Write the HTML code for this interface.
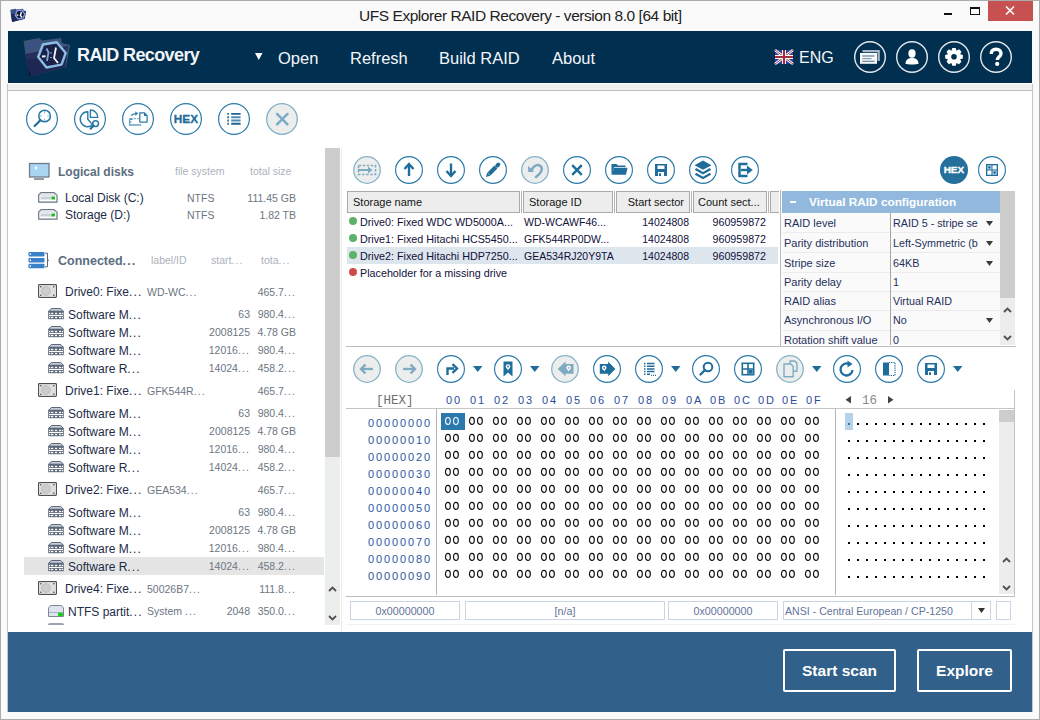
<!DOCTYPE html>
<html><head><meta charset="utf-8">
<style>
*{margin:0;padding:0;box-sizing:border-box}
html,body{width:1040px;height:720px;overflow:hidden;background:#fafafa;font-family:"Liberation Sans",sans-serif}
.a{position:absolute}
.t{position:absolute;white-space:nowrap;line-height:1}
svg{position:absolute;overflow:visible}
</style></head><body>
<!-- window border -->
<div class="a" style="left:0;top:0;width:1040px;height:720px;border:1px solid #ababab"></div>
<!-- title bar -->
<svg style="left:9px;top:7px" width="19.3" height="16.5" viewBox="0 0 56 46">
  <path d="M3.5 7 L19 4 L22 6.5 L41 4 L42 9 L50 11 L46 33 L12 42 L9.5 42 L6 24 Z" fill="#3a4f86"/>
  <path d="M5 20 L48 12 L45 33 L12 42 L9 42 Z" fill="#1e2a5a"/>
  <path d="M8 34 L11 42 L9.5 42 Z" fill="#0c1020"/>
  <polygon points="36.7,8.3 45.7,19 41.5,30.6 26.5,33.5 18.2,23 23,10.5" fill="#101830" stroke="#8898e0" stroke-width="4" stroke-linejoin="round"/>
  <path d="M22 22.5 L27 22.2" stroke="#fff" stroke-width="4"/>
  <path d="M36 13.5 L33 24 L38 29" stroke="#fff" stroke-width="4" fill="none"/>
</svg>
<div class="t" style="left:359px;top:8px;font-size:15.5px;letter-spacing:-0.45px;color:#222">UFS Explorer RAID Recovery - version 8.0 [64 bit]</div>
<div class="a" style="left:944px;top:13px;width:8px;height:2px;background:#111"></div>
<div class="a" style="left:970px;top:7px;width:10px;height:8px;border:1px solid #111;border-top-width:2px"></div>
<div class="a" style="left:988px;top:1px;width:45px;height:20px;background:#c75050"></div>
<svg style="left:1005px;top:6px" width="10" height="9" viewBox="0 0 10 9"><path d="M1 0.5 L9 8.5 M9 0.5 L1 8.5" stroke="#fff" stroke-width="1.6"/></svg>

<!-- header -->
<div class="a" style="left:8px;top:31px;width:1024px;height:52px;background:#012f50"></div>
<svg style="left:20px;top:34px" width="56" height="46" viewBox="0 0 56 46">
  <path d="M3.5 7 L19 4 L22 6.5 L41 4 L42 9 L50 11 L46 33 L12 42 L9.5 42 L6 24 Z" fill="#3c5479"/>
  <path d="M5 20 L48 12 L45 33 L12 42 L9 42 Z" fill="#24305a"/>
  <path d="M6 26 L47 20 L45 33 L12 42 L9 42 Z" fill="#1d2751"/>
  <path d="M8 34 L11 42 L9.5 42 Z" fill="#0c1020"/>
  <g fill="#4a3cc0"><circle cx="10" cy="11" r="0.7"/><circle cx="13" cy="9" r="0.7"/><circle cx="16" cy="8.5" r="0.7"/><circle cx="19" cy="8.5" r="0.7"/><circle cx="8.5" cy="14" r="0.7"/><circle cx="11.5" cy="13.5" r="0.7"/><circle cx="15" cy="11.5" r="0.7"/><circle cx="9" cy="19" r="0.7"/></g>
  <polygon points="36.7,8.3 45.7,19 41.5,30.6 26.5,33.5 18.2,23 23,10.5" fill="#1a2248" stroke="#8cbce6" stroke-width="2.4" stroke-linejoin="round"/>
  <path d="M22 22.5 L25.5 22.2" stroke="#f4f6fa" stroke-width="2"/>
  <path d="M26.5 14.5 L28.5 18.5 L27 27" stroke="#7fa8d8" stroke-width="1.8" fill="none"/>
  <path d="M36 13.5 L34 24 L38 29" stroke="#f4f6fa" stroke-width="1.8" fill="none"/>
  <path d="M31 18.5 V19.5 M31 23 V24" stroke="#9ec6ee" stroke-width="1.5"/>
</svg>
<div class="t" style="left:77px;top:46px;font-size:18px;font-weight:bold;color:#f2f4f8;letter-spacing:-0.6px">RAID Recovery</div>
<svg style="left:255px;top:53px" width="8" height="7" viewBox="0 0 8 7"><path d="M0 0 H7.5 L3.75 7 Z" fill="#fff"/></svg>
<div class="t" style="left:278px;top:50px;font-size:16.5px;color:#f4f6f9">Open</div>
<div class="t" style="left:350px;top:50px;font-size:16.5px;color:#f4f6f9">Refresh</div>
<div class="t" style="left:439px;top:50px;font-size:16.5px;color:#f4f6f9">Build RAID</div>
<div class="t" style="left:552px;top:50px;font-size:16.5px;color:#f4f6f9">About</div>
<svg style="left:775px;top:50px" width="18" height="14" viewBox="0 0 18 14">
  <rect width="18" height="14" fill="#2a40a0"/>
  <path d="M0 0 L18 14 M18 0 L0 14" stroke="#fff" stroke-width="2.6"/>
  <path d="M0 0 L18 14 M18 0 L0 14" stroke="#b03848" stroke-width="1"/>
  <path d="M9 0 V14 M0 7 H18" stroke="#fff" stroke-width="4"/>
  <path d="M9 0 V14 M0 7 H18" stroke="#a03040" stroke-width="2.2"/>
</svg>
<div class="t" style="left:799px;top:50px;font-size:16px;color:#f4f6f9">ENG</div>
<svg style="left:854px;top:41px" width="32" height="32" viewBox="0 0 32 32">
  <circle cx="16" cy="16" r="15.3" fill="none" stroke="#e4e8ec" stroke-width="1.4"/>
  <path d="M8.5 9 H25.8 V20 H23.5 V11.3 H8.5 Z" fill="#a9b7c6"/>
  <rect x="6" y="12" width="17" height="10.8" fill="#f6f8fa"/>
  <path d="M8.3 15 H20.5 M8.3 20.2 H20.5" stroke="#4f6680" stroke-width="1.1"/>
  <path d="M8.3 17.6 H17.5" stroke="#7d93aa" stroke-width="1.1"/>
</svg>
<svg style="left:896px;top:41px" width="32" height="32" viewBox="0 0 32 32">
  <circle cx="16" cy="16" r="15.3" fill="none" stroke="#e4e8ec" stroke-width="1.4"/>
  <ellipse cx="16" cy="12.5" rx="3.6" ry="4.2" fill="#fff"/>
  <path d="M9.5 22.5 C9.5 19 12 17.5 14.5 17 L17.5 17 C20 17.5 22.5 19 22.5 22.5 C22.5 23.8 9.5 23.8 9.5 22.5 Z" fill="#fff"/>
</svg>
<svg style="left:938px;top:41px" width="32" height="32" viewBox="0 0 32 32">
  <circle cx="16" cy="16" r="15.3" fill="none" stroke="#e4e8ec" stroke-width="1.4"/>
  <g transform="translate(16 15.8)"><path d="M-2.53 -6.10 L-1.72 -8.83 L1.72 -8.83 L2.53 -6.10 L2.53 -6.10 L5.03 -7.46 L7.46 -5.03 L6.10 -2.53 L6.10 -2.53 L8.83 -1.72 L8.83 1.72 L6.10 2.53 L6.10 2.53 L7.46 5.03 L5.03 7.46 L2.53 6.10 L2.53 6.10 L1.72 8.83 L-1.72 8.83 L-2.53 6.10 L-2.53 6.10 L-5.03 7.46 L-7.46 5.03 L-6.10 2.53 L-6.10 2.53 L-8.83 1.72 L-8.83 -1.72 L-6.10 -2.53 L-6.10 -2.53 L-7.46 -5.03 L-5.03 -7.46 L-2.53 -6.10 Z" fill="#fff"/><circle r="2.8" fill="#012f50"/></g>
</svg>
<svg style="left:980px;top:41px" width="32" height="32" viewBox="0 0 32 32">
  <circle cx="16" cy="16" r="15.3" fill="none" stroke="#e4e8ec" stroke-width="1.4"/>
  <path d="M11.2 13 C11.2 9.6 13.4 8.2 16.2 8.2 C19.2 8.2 21 10 21 12.5 C21 15.6 17.4 16 17.4 19" fill="none" stroke="#fff" stroke-width="3.4"/>
  <circle cx="17.2" cy="22.9" r="2.1" fill="#fff"/>
</svg>

<!-- strip below header -->
<div class="a" style="left:7px;top:83px;width:1026px;height:1px;background:#fff"></div>
<div class="a" style="left:8px;top:84px;width:1024px;height:6px;background:#eff1f1"></div>
<div class="a" style="left:7px;top:90px;width:1026px;height:1px;background:#bdbdbd"></div>
<div class="a" style="left:7px;top:84px;width:1px;height:628px;background:#c4c4c4"></div>
<div class="a" style="left:1032px;top:84px;width:1px;height:628px;background:#c4c4c4"></div>
<!-- content white -->
<div class="a" style="left:8px;top:91px;width:1024px;height:541px;background:#fff"></div>

<!-- toolbar 1 -->
<svg style="left:26px;top:103px" width="32" height="32" viewBox="0 0 32 32">
  <circle cx="16" cy="16" r="15.4" fill="none" stroke="#2a79a6" stroke-width="1.2"/>
  <circle cx="18.6" cy="13" r="5.8" fill="none" stroke="#2a79a6" stroke-width="1.6"/>
  <path d="M18.6 8 V10.3 M18.6 15.7 V18 M13.6 13 H15.9 M21.3 13 H23.6" stroke="#8ab8d4" stroke-width="1.1"/>
  <path d="M14.4 17.2 L8.6 23" stroke="#1f6d9a" stroke-width="2.2" stroke-linecap="round"/>
</svg>
<svg style="left:74px;top:103px" width="32" height="32" viewBox="0 0 32 32">
  <circle cx="16" cy="16" r="15.4" fill="none" stroke="#2a79a6" stroke-width="1.2"/>
  <path d="M13.8 8.7 A7.5 7.5 0 1 0 18.6 21.9 L13.8 16.2 Z" fill="none" stroke="#2a79a6" stroke-width="1.4" stroke-linejoin="round"/>
  <path d="M16.4 7 V14.4 H23.8 A7.4 7.4 0 0 0 16.4 7 Z" fill="none" stroke="#2a79a6" stroke-width="1.4" stroke-linejoin="round"/>
  <circle cx="21.6" cy="20.6" r="2.9" fill="#fff" stroke="#2a79a6" stroke-width="1.5"/>
  <path d="M19.6 22.7 L16.6 25.7" stroke="#1f6d9a" stroke-width="2" stroke-linecap="round"/>
</svg>
<svg style="left:122px;top:103px" width="32" height="32" viewBox="0 0 32 32">
  <circle cx="16" cy="16" r="15.4" fill="none" stroke="#2a79a6" stroke-width="1.2"/>
  <path d="M8 15.6 H17.4" stroke="#8ab8d4" stroke-width="1.1" stroke-dasharray="2.5 1"/>
  <path d="M7.6 15.6 V22 H19.2" fill="none" stroke="#6aa2c4" stroke-width="1.3"/>
  <path d="M8 16.2 H10.5" stroke="#2a79a6" stroke-width="1.1"/>
  <path d="M8.2 18.2 L9.8 19 L8.2 19.8 Z" fill="#2a79a6"/>
  <path d="M17.8 9.8 H22.3 L25.1 12.6 V19.1 H17.8 Z" fill="#fff" stroke="#2a79a6" stroke-width="1.25" stroke-linejoin="round"/>
  <path d="M22 9.4 L25.5 12.9 H22 Z" fill="#2a79a6"/>
  <path d="M9.2 12.6 C10.5 11.3 12 10.7 14 10.6" fill="none" stroke="#2a79a6" stroke-width="1.4"/>
  <path d="M13.4 8.3 L16 10.6 L13.4 12.8 Z" fill="#2a79a6"/>
</svg>
<svg style="left:170px;top:103px" width="32" height="32" viewBox="0 0 32 32">
  <circle cx="16" cy="16" r="15.4" fill="none" stroke="#2a79a6" stroke-width="1.2"/>
  <text x="3.8" y="19.8" font-family="Liberation Sans" font-weight="bold" font-size="10.6" textLength="24.2" lengthAdjust="spacingAndGlyphs" fill="#1f6d9a" stroke="#1f6d9a" stroke-width="0.3">HEX</text>
</svg>
<svg style="left:218px;top:103px" width="32" height="32" viewBox="0 0 32 32">
  <circle cx="16" cy="16" r="15.4" fill="none" stroke="#2a79a6" stroke-width="1.2"/>
  <path d="M9.3 10.9 H10.9 M9.3 14.2 H10.9 M9.3 17.5 H10.9 M9.3 20.8 H10.9 M13.2 10.9 H22.6 M13.2 20.8 H22.6" stroke="#1f6490" stroke-width="1.9"/>
  <path d="M13.2 14.2 H22.6 M13.2 17.5 H22.6" stroke="#4f8fb5" stroke-width="1.9"/>
</svg>
<svg style="left:266px;top:103px" width="32" height="32" viewBox="0 0 32 32">
  <circle cx="16" cy="16" r="15.3" fill="#eceeee" stroke="#82b0c8" stroke-width="1.3"/>
  <path d="M11 10.9 L21.5 21.4 M21.5 10.9 L11 21.4" stroke="#7aaac4" stroke-width="2.4" stroke-linecap="round"/>
</svg>

<!-- left panel -->
<svg style="left:29px;top:163px" width="21" height="18" viewBox="0 0 21 18"><rect x="0.5" y="0.5" width="19.5" height="13.5" fill="#a9d5f3" stroke="#6f7b8a" stroke-width="1.3"/><rect x="5" y="15.3" width="10" height="1.5" fill="#6f7b8a"/><path d="M6 2.5 V7 L8.5 5 Z" fill="#fff"/></svg>
<div class="t" style="left:58px;top:166px;font-size:12px;font-weight:bold;color:#5b6d80">Logical disks</div>
<div class="t" style="left:175px;top:166px;font-size:10.5px;color:#abb2ba">file system</div>
<div class="t" style="left:250px;top:166px;font-size:10.5px;color:#abb2ba">total size</div>
<svg style="left:38px;top:192px" width="20" height="11" viewBox="0 0 20 11"><path d="M3 0.7 H16 L19 3 V10.2 H0.7 V3 Z" fill="#fff" stroke="#6a7686" stroke-width="1.2" stroke-linejoin="round"/><path d="M1 3 H19" stroke="#b8c0ca" stroke-width="0.8"/><rect x="2.5" y="4.5" width="11" height="3" fill="#c9d0da"/><rect x="13.5" y="4.5" width="3.5" height="3" fill="#18c018"/></svg>
<div class="t" style="left:65px;top:192px;font-size:12px;color:#1d2b48">Local Disk (C:)</div>
<div class="t" style="left:187px;top:193px;font-size:10.5px;color:#6c7682">NTFS</div>
<div class="t" style="left:196px;width:100px;text-align:right;top:193px;font-size:10.5px;color:#6c7682">111.45 GB</div>
<svg style="left:38px;top:209px" width="20" height="11" viewBox="0 0 20 11"><path d="M3 0.7 H16 L19 3 V10.2 H0.7 V3 Z" fill="#fff" stroke="#6a7686" stroke-width="1.2" stroke-linejoin="round"/><path d="M1 3 H19" stroke="#b8c0ca" stroke-width="0.8"/><rect x="2.5" y="4.5" width="11" height="3" fill="#c9d0da"/><rect x="13.5" y="4.5" width="3.5" height="3" fill="#18c018"/></svg>
<div class="t" style="left:65px;top:209px;font-size:12px;color:#1d2b48">Storage (D:)</div>
<div class="t" style="left:187px;top:210px;font-size:10.5px;color:#6c7682">NTFS</div>
<div class="t" style="left:196px;width:100px;text-align:right;top:210px;font-size:10.5px;color:#6c7682">1.82 TB</div>
<svg style="left:28px;top:251px" width="22" height="18" viewBox="0 0 22 18"><g fill="#3b81c9"><rect x="0.5" y="1" width="16" height="4.4" rx="0.8"/><rect x="0.5" y="7" width="16" height="4.4" rx="0.8"/><rect x="0.5" y="12.8" width="16" height="4.4" rx="0.8"/></g><g fill="#fff"><rect x="1.8" y="2.4" width="1.2" height="1.6"/><rect x="1.8" y="8.4" width="1.2" height="1.6"/><rect x="1.8" y="14.2" width="1.2" height="1.6"/></g><path d="M17 2.2 H19.5 V15.8 H17 M19.5 9.2 H21" fill="none" stroke="#5a6470" stroke-width="1"/></svg>
<div class="t" style="left:58px;top:255px;font-size:12.5px;font-weight:bold;color:#5b6d80">Connected<span style="letter-spacing:1.1px">...</span></div>
<div class="t" style="left:151px;top:255px;font-size:10.5px;color:#abb2ba">label/ID</div>
<div class="t" style="left:211px;top:255px;font-size:10.5px;color:#abb2ba">start<span style="letter-spacing:1.1px">...</span></div>
<div class="t" style="left:261px;top:255px;font-size:10.5px;color:#abb2ba">tota<span style="letter-spacing:1.1px">...</span></div>
<div class="a" style="left:24px;top:557px;width:300px;height:18px;background:#e5e5e5"></div>
<svg style="left:38px;top:284px" width="20" height="15" viewBox="0 0 20 15"><rect x="0.6" y="0.6" width="17.8" height="12.8" rx="0.8" fill="#fff" stroke="#505054" stroke-width="1.2"/><rect x="2" y="2" width="15" height="10" fill="#dedee0"/><circle cx="7.9" cy="7" r="4.3" fill="#cdcdd0" stroke="#b4b4b8" stroke-width="0.8"/><g fill="#444"><circle cx="2.8" cy="2.8" r="0.8"/><circle cx="15.8" cy="2.8" r="0.8"/><circle cx="2.8" cy="11.3" r="0.8"/><circle cx="15.8" cy="11.3" r="0.8"/></g></svg>
<div class="t" style="left:65px;top:286px;font-size:12px;color:#1d2b48">Drive0: Fixe<span style="letter-spacing:1.1px">...</span></div>
<div class="t" style="left:147px;top:287px;font-size:10.5px;color:#6c7682">WD-WC<span style="letter-spacing:1.1px">...</span></div>
<div class="t" style="left:196px;width:100px;text-align:right;top:287px;font-size:10.5px;color:#6c7682">465.7<span style="letter-spacing:1.1px">...</span></div>
<svg style="left:48px;top:308px" width="16" height="12" viewBox="0 0 16 12"><path d="M3.2 0.5 H12.8 L15.3 3.2 H0.7 Z" fill="#c9cdd8" stroke="#5c6879" stroke-width="1"/><rect x="0.2" y="3" width="15.6" height="8.2" fill="#5c6879"/><g fill="#fff"><rect x="1" y="4.8" width="1.2" height="1.3"/><rect x="3" y="4.8" width="2.3" height="1.3"/><rect x="7" y="4.8" width="2.1" height="1.3"/><rect x="11" y="4.8" width="2.2" height="1.3"/><rect x="14" y="4.8" width="1.1" height="1.3"/><rect x="1" y="8.9" width="1.2" height="1.3"/><rect x="3" y="8.9" width="2.3" height="1.3"/><rect x="7" y="8.9" width="2.1" height="1.3"/><rect x="11" y="8.9" width="2.2" height="1.3"/><rect x="14" y="8.9" width="1.1" height="1.3"/><rect x="1" y="6.9" width="14" height="1.2"/></g></svg>
<div class="t" style="left:68px;top:309px;font-size:12px;color:#1d2b48">Software M<span style="letter-spacing:1.1px">...</span></div>
<div class="t" style="left:150px;width:100px;text-align:right;top:309px;font-size:10.5px;color:#6c7682">63</div>
<div class="t" style="left:196px;width:100px;text-align:right;top:309px;font-size:10.5px;color:#6c7682">980.4<span style="letter-spacing:1.1px">...</span></div>
<svg style="left:48px;top:326px" width="16" height="12" viewBox="0 0 16 12"><path d="M3.2 0.5 H12.8 L15.3 3.2 H0.7 Z" fill="#c9cdd8" stroke="#5c6879" stroke-width="1"/><rect x="0.2" y="3" width="15.6" height="8.2" fill="#5c6879"/><g fill="#fff"><rect x="1" y="4.8" width="1.2" height="1.3"/><rect x="3" y="4.8" width="2.3" height="1.3"/><rect x="7" y="4.8" width="2.1" height="1.3"/><rect x="11" y="4.8" width="2.2" height="1.3"/><rect x="14" y="4.8" width="1.1" height="1.3"/><rect x="1" y="8.9" width="1.2" height="1.3"/><rect x="3" y="8.9" width="2.3" height="1.3"/><rect x="7" y="8.9" width="2.1" height="1.3"/><rect x="11" y="8.9" width="2.2" height="1.3"/><rect x="14" y="8.9" width="1.1" height="1.3"/><rect x="1" y="6.9" width="14" height="1.2"/></g></svg>
<div class="t" style="left:68px;top:327px;font-size:12px;color:#1d2b48">Software M<span style="letter-spacing:1.1px">...</span></div>
<div class="t" style="left:150px;width:100px;text-align:right;top:327px;font-size:10.5px;color:#6c7682">2008125</div>
<div class="t" style="left:196px;width:100px;text-align:right;top:327px;font-size:10.5px;color:#6c7682">4.78 GB</div>
<svg style="left:48px;top:344px" width="16" height="12" viewBox="0 0 16 12"><path d="M3.2 0.5 H12.8 L15.3 3.2 H0.7 Z" fill="#c9cdd8" stroke="#5c6879" stroke-width="1"/><rect x="0.2" y="3" width="15.6" height="8.2" fill="#5c6879"/><g fill="#fff"><rect x="1" y="4.8" width="1.2" height="1.3"/><rect x="3" y="4.8" width="2.3" height="1.3"/><rect x="7" y="4.8" width="2.1" height="1.3"/><rect x="11" y="4.8" width="2.2" height="1.3"/><rect x="14" y="4.8" width="1.1" height="1.3"/><rect x="1" y="8.9" width="1.2" height="1.3"/><rect x="3" y="8.9" width="2.3" height="1.3"/><rect x="7" y="8.9" width="2.1" height="1.3"/><rect x="11" y="8.9" width="2.2" height="1.3"/><rect x="14" y="8.9" width="1.1" height="1.3"/><rect x="1" y="6.9" width="14" height="1.2"/></g></svg>
<div class="t" style="left:68px;top:345px;font-size:12px;color:#1d2b48">Software M<span style="letter-spacing:1.1px">...</span></div>
<div class="t" style="left:150px;width:100px;text-align:right;top:345px;font-size:10.5px;color:#6c7682">12016<span style="letter-spacing:1.1px">...</span></div>
<div class="t" style="left:196px;width:100px;text-align:right;top:345px;font-size:10.5px;color:#6c7682">980.4<span style="letter-spacing:1.1px">...</span></div>
<svg style="left:48px;top:362px" width="16" height="12" viewBox="0 0 16 12"><path d="M3.2 0.5 H12.8 L15.3 3.2 H0.7 Z" fill="#c9cdd8" stroke="#5c6879" stroke-width="1"/><rect x="0.2" y="3" width="15.6" height="8.2" fill="#5c6879"/><g fill="#fff"><rect x="1" y="4.8" width="1.2" height="1.3"/><rect x="3" y="4.8" width="2.3" height="1.3"/><rect x="7" y="4.8" width="2.1" height="1.3"/><rect x="11" y="4.8" width="2.2" height="1.3"/><rect x="14" y="4.8" width="1.1" height="1.3"/><rect x="1" y="8.9" width="1.2" height="1.3"/><rect x="3" y="8.9" width="2.3" height="1.3"/><rect x="7" y="8.9" width="2.1" height="1.3"/><rect x="11" y="8.9" width="2.2" height="1.3"/><rect x="14" y="8.9" width="1.1" height="1.3"/><rect x="1" y="6.9" width="14" height="1.2"/></g></svg>
<div class="t" style="left:68px;top:363px;font-size:12px;color:#1d2b48">Software R<span style="letter-spacing:1.1px">...</span></div>
<div class="t" style="left:150px;width:100px;text-align:right;top:363px;font-size:10.5px;color:#6c7682">14024<span style="letter-spacing:1.1px">...</span></div>
<div class="t" style="left:196px;width:100px;text-align:right;top:363px;font-size:10.5px;color:#6c7682">458.2<span style="letter-spacing:1.1px">...</span></div>
<svg style="left:38px;top:383px" width="20" height="15" viewBox="0 0 20 15"><rect x="0.6" y="0.6" width="17.8" height="12.8" rx="0.8" fill="#fff" stroke="#505054" stroke-width="1.2"/><rect x="2" y="2" width="15" height="10" fill="#dedee0"/><circle cx="7.9" cy="7" r="4.3" fill="#cdcdd0" stroke="#b4b4b8" stroke-width="0.8"/><g fill="#444"><circle cx="2.8" cy="2.8" r="0.8"/><circle cx="15.8" cy="2.8" r="0.8"/><circle cx="2.8" cy="11.3" r="0.8"/><circle cx="15.8" cy="11.3" r="0.8"/></g></svg>
<div class="t" style="left:65px;top:385px;font-size:12px;color:#1d2b48">Drive1: Fixe<span style="letter-spacing:1.1px">...</span></div>
<div class="t" style="left:147px;top:386px;font-size:10.5px;color:#6c7682">GFK544R<span style="letter-spacing:1.1px">...</span></div>
<div class="t" style="left:196px;width:100px;text-align:right;top:386px;font-size:10.5px;color:#6c7682">465.7<span style="letter-spacing:1.1px">...</span></div>
<svg style="left:48px;top:407px" width="16" height="12" viewBox="0 0 16 12"><path d="M3.2 0.5 H12.8 L15.3 3.2 H0.7 Z" fill="#c9cdd8" stroke="#5c6879" stroke-width="1"/><rect x="0.2" y="3" width="15.6" height="8.2" fill="#5c6879"/><g fill="#fff"><rect x="1" y="4.8" width="1.2" height="1.3"/><rect x="3" y="4.8" width="2.3" height="1.3"/><rect x="7" y="4.8" width="2.1" height="1.3"/><rect x="11" y="4.8" width="2.2" height="1.3"/><rect x="14" y="4.8" width="1.1" height="1.3"/><rect x="1" y="8.9" width="1.2" height="1.3"/><rect x="3" y="8.9" width="2.3" height="1.3"/><rect x="7" y="8.9" width="2.1" height="1.3"/><rect x="11" y="8.9" width="2.2" height="1.3"/><rect x="14" y="8.9" width="1.1" height="1.3"/><rect x="1" y="6.9" width="14" height="1.2"/></g></svg>
<div class="t" style="left:68px;top:408px;font-size:12px;color:#1d2b48">Software M<span style="letter-spacing:1.1px">...</span></div>
<div class="t" style="left:150px;width:100px;text-align:right;top:408px;font-size:10.5px;color:#6c7682">63</div>
<div class="t" style="left:196px;width:100px;text-align:right;top:408px;font-size:10.5px;color:#6c7682">980.4<span style="letter-spacing:1.1px">...</span></div>
<svg style="left:48px;top:425px" width="16" height="12" viewBox="0 0 16 12"><path d="M3.2 0.5 H12.8 L15.3 3.2 H0.7 Z" fill="#c9cdd8" stroke="#5c6879" stroke-width="1"/><rect x="0.2" y="3" width="15.6" height="8.2" fill="#5c6879"/><g fill="#fff"><rect x="1" y="4.8" width="1.2" height="1.3"/><rect x="3" y="4.8" width="2.3" height="1.3"/><rect x="7" y="4.8" width="2.1" height="1.3"/><rect x="11" y="4.8" width="2.2" height="1.3"/><rect x="14" y="4.8" width="1.1" height="1.3"/><rect x="1" y="8.9" width="1.2" height="1.3"/><rect x="3" y="8.9" width="2.3" height="1.3"/><rect x="7" y="8.9" width="2.1" height="1.3"/><rect x="11" y="8.9" width="2.2" height="1.3"/><rect x="14" y="8.9" width="1.1" height="1.3"/><rect x="1" y="6.9" width="14" height="1.2"/></g></svg>
<div class="t" style="left:68px;top:426px;font-size:12px;color:#1d2b48">Software M<span style="letter-spacing:1.1px">...</span></div>
<div class="t" style="left:150px;width:100px;text-align:right;top:426px;font-size:10.5px;color:#6c7682">2008125</div>
<div class="t" style="left:196px;width:100px;text-align:right;top:426px;font-size:10.5px;color:#6c7682">4.78 GB</div>
<svg style="left:48px;top:443px" width="16" height="12" viewBox="0 0 16 12"><path d="M3.2 0.5 H12.8 L15.3 3.2 H0.7 Z" fill="#c9cdd8" stroke="#5c6879" stroke-width="1"/><rect x="0.2" y="3" width="15.6" height="8.2" fill="#5c6879"/><g fill="#fff"><rect x="1" y="4.8" width="1.2" height="1.3"/><rect x="3" y="4.8" width="2.3" height="1.3"/><rect x="7" y="4.8" width="2.1" height="1.3"/><rect x="11" y="4.8" width="2.2" height="1.3"/><rect x="14" y="4.8" width="1.1" height="1.3"/><rect x="1" y="8.9" width="1.2" height="1.3"/><rect x="3" y="8.9" width="2.3" height="1.3"/><rect x="7" y="8.9" width="2.1" height="1.3"/><rect x="11" y="8.9" width="2.2" height="1.3"/><rect x="14" y="8.9" width="1.1" height="1.3"/><rect x="1" y="6.9" width="14" height="1.2"/></g></svg>
<div class="t" style="left:68px;top:444px;font-size:12px;color:#1d2b48">Software M<span style="letter-spacing:1.1px">...</span></div>
<div class="t" style="left:150px;width:100px;text-align:right;top:444px;font-size:10.5px;color:#6c7682">12016<span style="letter-spacing:1.1px">...</span></div>
<div class="t" style="left:196px;width:100px;text-align:right;top:444px;font-size:10.5px;color:#6c7682">980.4<span style="letter-spacing:1.1px">...</span></div>
<svg style="left:48px;top:461px" width="16" height="12" viewBox="0 0 16 12"><path d="M3.2 0.5 H12.8 L15.3 3.2 H0.7 Z" fill="#c9cdd8" stroke="#5c6879" stroke-width="1"/><rect x="0.2" y="3" width="15.6" height="8.2" fill="#5c6879"/><g fill="#fff"><rect x="1" y="4.8" width="1.2" height="1.3"/><rect x="3" y="4.8" width="2.3" height="1.3"/><rect x="7" y="4.8" width="2.1" height="1.3"/><rect x="11" y="4.8" width="2.2" height="1.3"/><rect x="14" y="4.8" width="1.1" height="1.3"/><rect x="1" y="8.9" width="1.2" height="1.3"/><rect x="3" y="8.9" width="2.3" height="1.3"/><rect x="7" y="8.9" width="2.1" height="1.3"/><rect x="11" y="8.9" width="2.2" height="1.3"/><rect x="14" y="8.9" width="1.1" height="1.3"/><rect x="1" y="6.9" width="14" height="1.2"/></g></svg>
<div class="t" style="left:68px;top:462px;font-size:12px;color:#1d2b48">Software R<span style="letter-spacing:1.1px">...</span></div>
<div class="t" style="left:150px;width:100px;text-align:right;top:462px;font-size:10.5px;color:#6c7682">14024<span style="letter-spacing:1.1px">...</span></div>
<div class="t" style="left:196px;width:100px;text-align:right;top:462px;font-size:10.5px;color:#6c7682">458.2<span style="letter-spacing:1.1px">...</span></div>
<svg style="left:38px;top:482px" width="20" height="15" viewBox="0 0 20 15"><rect x="0.6" y="0.6" width="17.8" height="12.8" rx="0.8" fill="#fff" stroke="#505054" stroke-width="1.2"/><rect x="2" y="2" width="15" height="10" fill="#dedee0"/><circle cx="7.9" cy="7" r="4.3" fill="#cdcdd0" stroke="#b4b4b8" stroke-width="0.8"/><g fill="#444"><circle cx="2.8" cy="2.8" r="0.8"/><circle cx="15.8" cy="2.8" r="0.8"/><circle cx="2.8" cy="11.3" r="0.8"/><circle cx="15.8" cy="11.3" r="0.8"/></g></svg>
<div class="t" style="left:65px;top:484px;font-size:12px;color:#1d2b48">Drive2: Fixe<span style="letter-spacing:1.1px">...</span></div>
<div class="t" style="left:147px;top:485px;font-size:10.5px;color:#6c7682">GEA534<span style="letter-spacing:1.1px">...</span></div>
<div class="t" style="left:196px;width:100px;text-align:right;top:485px;font-size:10.5px;color:#6c7682">465.7<span style="letter-spacing:1.1px">...</span></div>
<svg style="left:48px;top:506px" width="16" height="12" viewBox="0 0 16 12"><path d="M3.2 0.5 H12.8 L15.3 3.2 H0.7 Z" fill="#c9cdd8" stroke="#5c6879" stroke-width="1"/><rect x="0.2" y="3" width="15.6" height="8.2" fill="#5c6879"/><g fill="#fff"><rect x="1" y="4.8" width="1.2" height="1.3"/><rect x="3" y="4.8" width="2.3" height="1.3"/><rect x="7" y="4.8" width="2.1" height="1.3"/><rect x="11" y="4.8" width="2.2" height="1.3"/><rect x="14" y="4.8" width="1.1" height="1.3"/><rect x="1" y="8.9" width="1.2" height="1.3"/><rect x="3" y="8.9" width="2.3" height="1.3"/><rect x="7" y="8.9" width="2.1" height="1.3"/><rect x="11" y="8.9" width="2.2" height="1.3"/><rect x="14" y="8.9" width="1.1" height="1.3"/><rect x="1" y="6.9" width="14" height="1.2"/></g></svg>
<div class="t" style="left:68px;top:507px;font-size:12px;color:#1d2b48">Software M<span style="letter-spacing:1.1px">...</span></div>
<div class="t" style="left:150px;width:100px;text-align:right;top:507px;font-size:10.5px;color:#6c7682">63</div>
<div class="t" style="left:196px;width:100px;text-align:right;top:507px;font-size:10.5px;color:#6c7682">980.4<span style="letter-spacing:1.1px">...</span></div>
<svg style="left:48px;top:524px" width="16" height="12" viewBox="0 0 16 12"><path d="M3.2 0.5 H12.8 L15.3 3.2 H0.7 Z" fill="#c9cdd8" stroke="#5c6879" stroke-width="1"/><rect x="0.2" y="3" width="15.6" height="8.2" fill="#5c6879"/><g fill="#fff"><rect x="1" y="4.8" width="1.2" height="1.3"/><rect x="3" y="4.8" width="2.3" height="1.3"/><rect x="7" y="4.8" width="2.1" height="1.3"/><rect x="11" y="4.8" width="2.2" height="1.3"/><rect x="14" y="4.8" width="1.1" height="1.3"/><rect x="1" y="8.9" width="1.2" height="1.3"/><rect x="3" y="8.9" width="2.3" height="1.3"/><rect x="7" y="8.9" width="2.1" height="1.3"/><rect x="11" y="8.9" width="2.2" height="1.3"/><rect x="14" y="8.9" width="1.1" height="1.3"/><rect x="1" y="6.9" width="14" height="1.2"/></g></svg>
<div class="t" style="left:68px;top:525px;font-size:12px;color:#1d2b48">Software M<span style="letter-spacing:1.1px">...</span></div>
<div class="t" style="left:150px;width:100px;text-align:right;top:525px;font-size:10.5px;color:#6c7682">2008125</div>
<div class="t" style="left:196px;width:100px;text-align:right;top:525px;font-size:10.5px;color:#6c7682">4.78 GB</div>
<svg style="left:48px;top:542px" width="16" height="12" viewBox="0 0 16 12"><path d="M3.2 0.5 H12.8 L15.3 3.2 H0.7 Z" fill="#c9cdd8" stroke="#5c6879" stroke-width="1"/><rect x="0.2" y="3" width="15.6" height="8.2" fill="#5c6879"/><g fill="#fff"><rect x="1" y="4.8" width="1.2" height="1.3"/><rect x="3" y="4.8" width="2.3" height="1.3"/><rect x="7" y="4.8" width="2.1" height="1.3"/><rect x="11" y="4.8" width="2.2" height="1.3"/><rect x="14" y="4.8" width="1.1" height="1.3"/><rect x="1" y="8.9" width="1.2" height="1.3"/><rect x="3" y="8.9" width="2.3" height="1.3"/><rect x="7" y="8.9" width="2.1" height="1.3"/><rect x="11" y="8.9" width="2.2" height="1.3"/><rect x="14" y="8.9" width="1.1" height="1.3"/><rect x="1" y="6.9" width="14" height="1.2"/></g></svg>
<div class="t" style="left:68px;top:543px;font-size:12px;color:#1d2b48">Software M<span style="letter-spacing:1.1px">...</span></div>
<div class="t" style="left:150px;width:100px;text-align:right;top:543px;font-size:10.5px;color:#6c7682">12016<span style="letter-spacing:1.1px">...</span></div>
<div class="t" style="left:196px;width:100px;text-align:right;top:543px;font-size:10.5px;color:#6c7682">980.4<span style="letter-spacing:1.1px">...</span></div>
<svg style="left:48px;top:560px" width="16" height="12" viewBox="0 0 16 12"><path d="M3.2 0.5 H12.8 L15.3 3.2 H0.7 Z" fill="#c9cdd8" stroke="#5c6879" stroke-width="1"/><rect x="0.2" y="3" width="15.6" height="8.2" fill="#5c6879"/><g fill="#fff"><rect x="1" y="4.8" width="1.2" height="1.3"/><rect x="3" y="4.8" width="2.3" height="1.3"/><rect x="7" y="4.8" width="2.1" height="1.3"/><rect x="11" y="4.8" width="2.2" height="1.3"/><rect x="14" y="4.8" width="1.1" height="1.3"/><rect x="1" y="8.9" width="1.2" height="1.3"/><rect x="3" y="8.9" width="2.3" height="1.3"/><rect x="7" y="8.9" width="2.1" height="1.3"/><rect x="11" y="8.9" width="2.2" height="1.3"/><rect x="14" y="8.9" width="1.1" height="1.3"/><rect x="1" y="6.9" width="14" height="1.2"/></g></svg>
<div class="t" style="left:68px;top:561px;font-size:12px;color:#1d2b48">Software R<span style="letter-spacing:1.1px">...</span></div>
<div class="t" style="left:150px;width:100px;text-align:right;top:561px;font-size:10.5px;color:#6c7682">14024<span style="letter-spacing:1.1px">...</span></div>
<div class="t" style="left:196px;width:100px;text-align:right;top:561px;font-size:10.5px;color:#6c7682">458.2<span style="letter-spacing:1.1px">...</span></div>
<svg style="left:38px;top:581px" width="20" height="15" viewBox="0 0 20 15"><rect x="0.6" y="0.6" width="17.8" height="12.8" rx="0.8" fill="#fff" stroke="#505054" stroke-width="1.2"/><rect x="2" y="2" width="15" height="10" fill="#dedee0"/><circle cx="7.9" cy="7" r="4.3" fill="#cdcdd0" stroke="#b4b4b8" stroke-width="0.8"/><g fill="#444"><circle cx="2.8" cy="2.8" r="0.8"/><circle cx="15.8" cy="2.8" r="0.8"/><circle cx="2.8" cy="11.3" r="0.8"/><circle cx="15.8" cy="11.3" r="0.8"/></g></svg>
<div class="t" style="left:65px;top:583px;font-size:12px;color:#1d2b48">Drive4: Fixe<span style="letter-spacing:1.1px">...</span></div>
<div class="t" style="left:147px;top:584px;font-size:10.5px;color:#6c7682">50026B7<span style="letter-spacing:1.1px">...</span></div>
<div class="t" style="left:196px;width:100px;text-align:right;top:584px;font-size:10.5px;color:#6c7682">111.8<span style="letter-spacing:1.1px">...</span></div>
<svg style="left:48px;top:605px" width="16" height="13" viewBox="0 0 16 13"><path d="M2.5 0.5 H13.5 L15.5 3 V11.5 H0.5 V3 Z" fill="#dfe4ec" stroke="#7c8898" stroke-width="1" stroke-linejoin="round"/><path d="M1 7.5 H15" stroke="#9aa4b2" stroke-width="0.8"/><rect x="10" y="7.8" width="5" height="3.4" rx="1.2" fill="#12d012"/></svg>
<div class="t" style="left:68px;top:606px;font-size:12px;color:#1d2b48">NTFS partit<span style="letter-spacing:1.1px">...</span></div>
<div class="t" style="left:147px;top:606px;font-size:10.5px;color:#6c7682">System <span style="letter-spacing:1.1px">...</span></div>
<div class="t" style="left:150px;width:100px;text-align:right;top:606px;font-size:10.5px;color:#6c7682">2048</div>
<div class="t" style="left:196px;width:100px;text-align:right;top:606px;font-size:10.5px;color:#6c7682">350.0<span style="letter-spacing:1.1px">...</span></div>
<div class="a" style="left:48px;top:622px;width:16px;height:3px;overflow:hidden"><div class="a" style="left:0;top:1px;width:16px;height:4px;border-radius:2px 2px 0 0;background:#9aa4b2"></div></div>
<div class="a" style="left:325px;top:148px;width:15px;height:477px;background:#eceeee"></div>
<div class="a" style="left:325px;top:148px;width:15px;height:309px;background:#cdcdcd"></div>
<svg style="left:328px;top:586px" width="9" height="6" viewBox="0 0 9 6"><path d="M1 5 L4.5 1.5 L8 5" fill="none" stroke="#505050" stroke-width="1.8"/></svg>
<svg style="left:328px;top:615px" width="9" height="6" viewBox="0 0 9 6"><path d="M1 1 L4.5 4.5 L8 1" fill="none" stroke="#505050" stroke-width="1.8"/></svg>
<div class="a" style="left:341px;top:148px;width:1px;height:484px;background:#ececec"></div>
<!-- toolbar 2 -->
<svg style="left:353px;top:156px" width="28" height="28" viewBox="0 0 28 28"><circle cx="14" cy="14" r="13.3" fill="#eceeee" stroke="#86b2c8" stroke-width="1.3"/><rect x="5.5" y="9.5" width="17" height="9" fill="none" stroke="#7eaac2" stroke-width="1.6" stroke-dasharray="2.5 1.6"/><path d="M5 14 H17" stroke="#7eaac2" stroke-width="2"/><path d="M15 10.5 L19.5 14 L15 17.5 Z" fill="#7eaac2"/></svg>
<svg style="left:395px;top:156px" width="28" height="28" viewBox="0 0 28 28"><circle cx="14" cy="14" r="13.4" fill="none" stroke="#2a79a6" stroke-width="1.15"/><path d="M14 20 V9" stroke="#1f6d9a" stroke-width="2.4"/><path d="M9.5 13 L14 8 L18.5 13" fill="none" stroke="#1f6d9a" stroke-width="2.4" stroke-linejoin="miter"/></svg>
<svg style="left:437px;top:156px" width="28" height="28" viewBox="0 0 28 28"><circle cx="14" cy="14" r="13.4" fill="none" stroke="#2a79a6" stroke-width="1.15"/><path d="M14 7.5 V18.5" stroke="#1f6d9a" stroke-width="2.4"/><path d="M9.5 15 L14 20 L18.5 15" fill="none" stroke="#1f6d9a" stroke-width="2.4"/></svg>
<svg style="left:479px;top:156px" width="28" height="28" viewBox="0 0 28 28"><circle cx="14" cy="14" r="13.4" fill="none" stroke="#2a79a6" stroke-width="1.15"/><path d="M10 17.9 L16.9 11" stroke="#1f6d9a" stroke-width="4.2"/><path d="M7 20.9 L8.2 16.6 L11.3 19.7 Z" fill="#1f6d9a"/><path d="M18.3 9.6 L19.3 8.6" stroke="#1f6d9a" stroke-width="4" stroke-linecap="round"/></svg>
<svg style="left:521px;top:156px" width="28" height="28" viewBox="0 0 28 28"><circle cx="14" cy="14" r="13.3" fill="#eceeee" stroke="#86b2c8" stroke-width="1.3"/><path d="M10.8 13.6 C12.8 9.6 17.2 7.4 19.8 10.4 C22.2 13.2 20.2 16.8 15 21" fill="none" stroke="#7eaac2" stroke-width="2.5" stroke-linecap="round"/><path d="M7.1 9.8 V15.9 H13.2 Z" fill="#7eaac2"/></svg>
<svg style="left:563px;top:156px" width="28" height="28" viewBox="0 0 28 28"><circle cx="14" cy="14" r="13.4" fill="none" stroke="#2a79a6" stroke-width="1.15"/><path d="M9.2 9.2 L18.8 18.8 M18.8 9.2 L9.2 18.8" stroke="#1f6d9a" stroke-width="2.4"/></svg>
<svg style="left:605px;top:156px" width="28" height="28" viewBox="0 0 28 28"><circle cx="14" cy="14" r="13.4" fill="none" stroke="#2a79a6" stroke-width="1.15"/><path d="M6.5 8 H11.5 L13 9.5 H20.5 V11 H9 L7.5 18.5 H6.5 Z" fill="#1f6d9a"/><path d="M9 11.8 H22.5 L21 18.8 H7 Z" fill="#1f6d9a"/></svg>
<svg style="left:647px;top:156px" width="28" height="28" viewBox="0 0 28 28"><circle cx="14" cy="14" r="13.4" fill="none" stroke="#2a79a6" stroke-width="1.15"/><path d="M8 8 H20 V20 H8 Z" fill="#1f6d9a"/><rect x="10.5" y="9.5" width="7" height="3.5" fill="#fff"/><rect x="11" y="16" width="6" height="4" fill="#fff"/><rect x="12" y="17.3" width="2" height="2.7" fill="#1f6d9a"/></svg>
<svg style="left:689px;top:156px" width="28" height="28" viewBox="0 0 28 28"><circle cx="14" cy="14" r="13.4" fill="none" stroke="#2a79a6" stroke-width="1.15"/><path d="M14 4.5 L22.5 9.2 L14 13.8 L5.5 9.2 Z" fill="#1f6d9a"/><path d="M6.5 13 L14 17.2 L21.5 13" fill="none" stroke="#1f6d9a" stroke-width="2.2"/><path d="M6.5 17.8 L14 22 L21.5 17.8" fill="none" stroke="#1f6d9a" stroke-width="2.2"/></svg>
<svg style="left:731px;top:156px" width="28" height="28" viewBox="0 0 28 28"><circle cx="14" cy="14" r="13.4" fill="none" stroke="#2a79a6" stroke-width="1.15"/><path d="M16.5 8 H8.5 V20 H16.5" fill="none" stroke="#1f6d9a" stroke-width="2.4"/><path d="M10 14 H18" stroke="#1f6d9a" stroke-width="2.4"/><path d="M16 9.6 L21.8 14 L16 18.4 Z" fill="#1f6d9a"/></svg>
<svg style="left:940px;top:156px" width="28" height="28" viewBox="0 0 28 28"><circle cx="14" cy="14" r="14" fill="#246f9b"/><text x="3.7" y="17.3" font-family="Liberation Sans" font-weight="bold" font-size="9" textLength="20.4" lengthAdjust="spacingAndGlyphs" fill="#fff" stroke="#fff" stroke-width="0.35">HEX</text></svg>
<svg style="left:978px;top:156px" width="28" height="28" viewBox="0 0 28 28"><circle cx="14" cy="14" r="13.4" fill="none" stroke="#2a79a6" stroke-width="1.15"/><rect x="8" y="8" width="12" height="12" fill="#1f6d9a"/><rect x="9.3" y="9.3" width="4.2" height="4.2" fill="#cfe0ea"/><rect x="14.5" y="9.3" width="4.2" height="4.2" fill="#fff"/><rect x="9.3" y="14.5" width="4.2" height="4.2" fill="#fff"/><rect x="14.5" y="14.5" width="4.2" height="4.2" fill="#cfe0ea"/><circle cx="11.4" cy="11.4" r="1.3" fill="#1f6d9a"/><circle cx="16.6" cy="16.6" r="1.3" fill="#1f6d9a"/></svg>
<!-- table -->
<div style="position:absolute;top:191px;height:22px;border:1px solid #a9a9a9;background:#ecedec;left:347px;width:173px;"></div>
<div class="t" style="left:353px;top:197px;font-size:11px;color:#151515">Storage name</div>
<div style="position:absolute;top:191px;height:22px;border:1px solid #a9a9a9;background:#ecedec;left:523px;width:90px;"></div>
<div class="t" style="left:529px;top:197px;font-size:11px;color:#151515">Storage ID</div>
<div style="position:absolute;top:191px;height:22px;border:1px solid #a9a9a9;background:#ecedec;left:616px;width:74px;"></div>
<div class="t" style="left:616px;width:68px;text-align:right;top:197px;font-size:11px;color:#151515">Start sector</div>
<div style="position:absolute;top:191px;height:22px;border:1px solid #a9a9a9;background:#ecedec;left:693px;width:74px;"></div>
<div class="t" style="left:698px;top:197px;font-size:11px;color:#151515">Count sect...</div>
<div style="position:absolute;top:191px;height:22px;border:1px solid #a9a9a9;background:#ecedec;left:770px;width:9px;border-right:none;"></div>
<div class="a" style="left:521px;top:191px;width:1px;height:22px;background:#b4b4b4"></div>
<div class="a" style="left:614px;top:191px;width:1px;height:22px;background:#b4b4b4"></div>
<div class="a" style="left:691px;top:191px;width:1px;height:22px;background:#b4b4b4"></div>
<div class="a" style="left:768px;top:191px;width:1px;height:22px;background:#b4b4b4"></div>
<div class="a" style="left:347px;top:247px;width:431px;height:17px;background:#dde5ed"></div>
<div class="a" style="left:349px;top:217px;width:8px;height:8px;border-radius:50%;background:#5cb26a"></div>
<div class="t" style="left:360px;top:217px;font-size:10.75px;color:#10103a">Drive0: Fixed WDC WD5000A...</div>
<div class="t" style="left:524px;top:217px;font-size:10.5px;color:#10103a">WD-WCAWF46...</div>
<div class="t" style="left:600px;width:89px;text-align:right;top:217px;font-size:10.5px;color:#10103a">14024808</div>
<div class="t" style="left:680px;width:86px;text-align:right;top:217px;font-size:10.7px;color:#10103a">960959872</div>
<div class="a" style="left:349px;top:234px;width:8px;height:8px;border-radius:50%;background:#5cb26a"></div>
<div class="t" style="left:360px;top:234px;font-size:10.75px;color:#10103a">Drive1: Fixed Hitachi HCS5450...</div>
<div class="t" style="left:524px;top:234px;font-size:10.5px;color:#10103a">GFK544RP0DW...</div>
<div class="t" style="left:600px;width:89px;text-align:right;top:234px;font-size:10.5px;color:#10103a">14024808</div>
<div class="t" style="left:680px;width:86px;text-align:right;top:234px;font-size:10.7px;color:#10103a">960959872</div>
<div class="a" style="left:349px;top:251px;width:8px;height:8px;border-radius:50%;background:#5cb26a"></div>
<div class="t" style="left:360px;top:251px;font-size:10.75px;color:#10103a">Drive2: Fixed Hitachi HDP7250...</div>
<div class="t" style="left:524px;top:251px;font-size:10.5px;color:#10103a">GEA534RJ20Y9TA</div>
<div class="t" style="left:600px;width:89px;text-align:right;top:251px;font-size:10.5px;color:#10103a">14024808</div>
<div class="t" style="left:680px;width:86px;text-align:right;top:251px;font-size:10.7px;color:#10103a">960959872</div>
<div class="a" style="left:349px;top:268px;width:8px;height:8px;border-radius:50%;background:#d04a4c"></div>
<div class="t" style="left:360px;top:268px;font-size:10.75px;color:#10103a">Placeholder for a missing drive</div>
<div class="a" style="left:780px;top:190px;width:1px;height:156px;background:#b8b8b8"></div>
<div class="a" style="left:782px;top:191px;width:218px;height:22px;background:#92b9dd"></div>
<div class="a" style="left:790px;top:201px;width:6px;height:2px;background:#fff"></div>
<div class="t" style="left:809px;top:197px;font-size:11.8px;font-weight:bold;color:#fff">Virtual RAID configuration</div>
<div class="a" style="left:782px;top:213px;width:218px;height:132px;background:#fafafa"></div>
<div class="a" style="left:782px;top:232px;width:218px;height:1px;background:#ececec"></div>
<div class="a" style="left:782px;top:252px;width:218px;height:1px;background:#ececec"></div>
<div class="a" style="left:782px;top:272px;width:218px;height:1px;background:#ececec"></div>
<div class="a" style="left:782px;top:291px;width:218px;height:1px;background:#ececec"></div>
<div class="a" style="left:782px;top:310px;width:218px;height:1px;background:#ececec"></div>
<div class="a" style="left:782px;top:330px;width:218px;height:1px;background:#ececec"></div>
<div class="a" style="left:890px;top:213px;width:1px;height:132px;background:#a6a6a6"></div>
<div class="t" style="left:784px;top:218px;font-size:11px;color:#1f2f5a">RAID level</div>
<div class="t" style="left:893px;top:218px;font-size:10.75px;color:#1f2f5a">RAID 5 - stripe se</div>
<svg style="left:986px;top:221px" width="7" height="5" viewBox="0 0 7 5"><path d="M0 0 H7 L3.5 5 Z" fill="#3c3c3c"/></svg>
<div class="t" style="left:784px;top:238px;font-size:11px;color:#1f2f5a">Parity distribution</div>
<div class="t" style="left:893px;top:238px;font-size:10.75px;color:#1f2f5a">Left-Symmetric (b</div>
<svg style="left:986px;top:241px" width="7" height="5" viewBox="0 0 7 5"><path d="M0 0 H7 L3.5 5 Z" fill="#3c3c3c"/></svg>
<div class="t" style="left:784px;top:258px;font-size:11px;color:#1f2f5a">Stripe size</div>
<div class="t" style="left:893px;top:258px;font-size:10.75px;color:#1f2f5a">64KB</div>
<svg style="left:986px;top:261px" width="7" height="5" viewBox="0 0 7 5"><path d="M0 0 H7 L3.5 5 Z" fill="#3c3c3c"/></svg>
<div class="t" style="left:784px;top:277px;font-size:11px;color:#1f2f5a">Parity delay</div>
<div class="t" style="left:893px;top:277px;font-size:10.75px;color:#1f2f5a">1</div>
<div class="t" style="left:784px;top:296px;font-size:11px;color:#1f2f5a">RAID alias</div>
<div class="t" style="left:893px;top:296px;font-size:10.75px;color:#1f2f5a">Virtual RAID</div>
<div class="t" style="left:784px;top:315px;font-size:11px;color:#1f2f5a">Asynchronous I/O</div>
<div class="t" style="left:893px;top:315px;font-size:10.75px;color:#1f2f5a">No</div>
<svg style="left:986px;top:318px" width="7" height="5" viewBox="0 0 7 5"><path d="M0 0 H7 L3.5 5 Z" fill="#3c3c3c"/></svg>
<div class="t" style="left:784px;top:335px;font-size:11px;color:#1f2f5a">Rotation shift value</div>
<div class="t" style="left:893px;top:335px;font-size:10.75px;color:#1f2f5a">0</div>
<div class="a" style="left:1000px;top:191px;width:15px;height:154px;background:#eceeee"></div>
<div class="a" style="left:1000px;top:191px;width:15px;height:107px;background:#cdcdcd"></div>
<svg style="left:1003px;top:307px" width="9" height="6" viewBox="0 0 9 6"><path d="M1 5 L4.5 1.5 L8 5" fill="none" stroke="#505050" stroke-width="1.8"/></svg>
<svg style="left:1003px;top:335px" width="9" height="6" viewBox="0 0 9 6"><path d="M1 1 L4.5 4.5 L8 1" fill="none" stroke="#505050" stroke-width="1.8"/></svg>
<div class="a" style="left:346px;top:346px;width:670px;height:1px;background:#bcbcbc"></div>
<!-- hex toolbar -->
<svg style="left:353px;top:355px" width="28" height="28" viewBox="0 0 28 28"><circle cx="14" cy="14" r="13.3" fill="#eceeee" stroke="#86b2c8" stroke-width="1.3"/><path d="M8 14 H20" stroke="#7eaac2" stroke-width="2.4"/><path d="M12.5 9.5 L8 14 L12.5 18.5" fill="none" stroke="#7eaac2" stroke-width="2.4"/></svg>
<svg style="left:395px;top:355px" width="28" height="28" viewBox="0 0 28 28"><circle cx="14" cy="14" r="13.3" fill="#eceeee" stroke="#86b2c8" stroke-width="1.3"/><path d="M8 14 H20" stroke="#7eaac2" stroke-width="2.4"/><path d="M15.5 9.5 L20 14 L15.5 18.5" fill="none" stroke="#7eaac2" stroke-width="2.4"/></svg>
<svg style="left:437px;top:355px" width="28" height="28" viewBox="0 0 28 28"><circle cx="14" cy="14" r="13.4" fill="none" stroke="#2a79a6" stroke-width="1.15"/><path d="M10.5 20 V13.5 H17" fill="none" stroke="#1f6d9a" stroke-width="2.4"/><path d="M15.5 9.2 L20 13.5 L15.5 17.8" fill="none" stroke="#1f6d9a" stroke-width="2.4"/></svg>
<svg style="left:473px;top:366px" width="10" height="6" viewBox="0 0 10 6"><path d="M0 0 H9.5 L4.75 6 Z" fill="#1f6d9a"/></svg>
<svg style="left:494px;top:355px" width="28" height="28" viewBox="0 0 28 28"><circle cx="14" cy="14" r="13.4" fill="none" stroke="#2a79a6" stroke-width="1.15"/><path d="M9.5 6.5 H18.5 V21.5 L14 17.5 L9.5 21.5 Z" fill="#1f6d9a"/><circle cx="14" cy="11.5" r="2.3" fill="#fff"/><path d="M12.6 12.5 L14 15.5 L15.4 12.5 Z" fill="#fff"/><circle cx="14" cy="11.5" r="0.9" fill="#1f6d9a"/></svg>
<svg style="left:530px;top:366px" width="10" height="6" viewBox="0 0 10 6"><path d="M0 0 H9.5 L4.75 6 Z" fill="#1f6d9a"/></svg>
<svg style="left:551px;top:355px" width="28" height="28" viewBox="0 0 28 28"><circle cx="14" cy="14" r="13.3" fill="#eceeee" stroke="#86b2c8" stroke-width="1.3"/><path d="M6.7 13.9 L14.5 6.4 V9 H22.5 V18.7 H14.5 V21.2 Z" fill="#7eaac2"/><circle cx="17.6" cy="12.8" r="2.3" fill="#fff"/><path d="M16.3 13.8 L17.6 16.6 L18.9 13.8 Z" fill="#fff"/><circle cx="17.6" cy="12.8" r="0.9" fill="#7eaac2"/></svg>
<svg style="left:593px;top:355px" width="28" height="28" viewBox="0 0 28 28"><circle cx="14" cy="14" r="13.4" fill="none" stroke="#2a79a6" stroke-width="1.15"/><path d="M6.8 9 H15.2 V6.4 L22.4 13.9 L15.2 21.2 V18.7 H6.8 Z" fill="#1f6d9a"/><circle cx="11.2" cy="12.8" r="2.3" fill="#fff"/><path d="M9.9 13.8 L11.2 16.6 L12.5 13.8 Z" fill="#fff"/><circle cx="11.2" cy="12.8" r="0.9" fill="#1f6d9a"/></svg>
<svg style="left:635px;top:355px" width="28" height="28" viewBox="0 0 28 28"><circle cx="14" cy="14" r="13.4" fill="none" stroke="#2a79a6" stroke-width="1.15"/><path d="M9 8.5 H10.5 M9 11.2 H10.5 M9 13.9 H10.5 M9 16.6 H10.5 M9 19.3 H10.5" stroke="#1f6d9a" stroke-width="1.5"/><path d="M12 8.5 H19.5 M12 11.2 H19.5 M12 13.9 H19.5 M12 16.6 H19.5 M12 19.3 H15" stroke="#1f6d9a" stroke-width="1.5"/><path d="M16 20.3 H17 M18 20.3 H19 M20 20.3 H21" stroke="#1f6d9a" stroke-width="1.2"/></svg>
<svg style="left:671px;top:366px" width="10" height="6" viewBox="0 0 10 6"><path d="M0 0 H9.5 L4.75 6 Z" fill="#1f6d9a"/></svg>
<svg style="left:692px;top:355px" width="28" height="28" viewBox="0 0 28 28"><circle cx="14" cy="14" r="13.4" fill="none" stroke="#2a79a6" stroke-width="1.15"/><circle cx="16" cy="12" r="4.3" fill="none" stroke="#1f6d9a" stroke-width="2"/><path d="M13 15 L8.5 19.5" stroke="#1f6d9a" stroke-width="2.4" stroke-linecap="round"/></svg>
<svg style="left:734px;top:355px" width="28" height="28" viewBox="0 0 28 28"><circle cx="14" cy="14" r="13.4" fill="none" stroke="#2a79a6" stroke-width="1.15"/><rect x="8.3" y="8.3" width="11.4" height="11.4" fill="none" stroke="#1f6d9a" stroke-width="1.6"/><path d="M14 8.3 V19.7 M8.3 14 H19.7" stroke="#1f6d9a" stroke-width="1.6"/><rect x="15" y="15" width="3.7" height="3.7" fill="#1f6d9a"/></svg>
<svg style="left:776px;top:355px" width="28" height="28" viewBox="0 0 28 28"><circle cx="14" cy="14" r="13.3" fill="#eceeee" stroke="#86b2c8" stroke-width="1.3"/><path d="M14 9 V6 H18.8 L20.9 8.1 V16.2 H17.6" fill="none" stroke="#7eaac2" stroke-width="1.4" stroke-linejoin="round"/><path d="M8 9 H14.8 L17.2 11.4 V21.8 H8 Z" fill="#eceeee" stroke="#7eaac2" stroke-width="1.4" stroke-linejoin="round"/></svg>
<svg style="left:812px;top:366px" width="10" height="6" viewBox="0 0 10 6"><path d="M0 0 H9.5 L4.75 6 Z" fill="#1f6d9a"/></svg>
<svg style="left:833px;top:355px" width="28" height="28" viewBox="0 0 28 28"><circle cx="14" cy="14" r="13.4" fill="none" stroke="#2a79a6" stroke-width="1.15"/><path d="M19.5 15 A6 6 0 1 1 16 9" fill="none" stroke="#1f6d9a" stroke-width="2.3"/><path d="M14.5 5.5 L19.5 9 L14.5 12.5 Z" fill="#1f6d9a"/></svg>
<svg style="left:875px;top:355px" width="28" height="28" viewBox="0 0 28 28"><circle cx="14" cy="14" r="13.4" fill="none" stroke="#2a79a6" stroke-width="1.15"/><rect x="8" y="7.5" width="6" height="13" fill="#1f6d9a"/><path d="M14 7.5 H20 V20.5 H14" fill="none" stroke="#1f6d9a" stroke-width="1.2" stroke-dasharray="1.2 1"/></svg>
<svg style="left:917px;top:355px" width="28" height="28" viewBox="0 0 28 28"><circle cx="14" cy="14" r="13.4" fill="none" stroke="#2a79a6" stroke-width="1.15"/><path d="M8 8 H20 V20 H8 Z" fill="#1f6d9a"/><rect x="10.5" y="9.5" width="7" height="3.5" fill="#fff"/><rect x="11" y="16" width="6" height="4" fill="#fff"/><rect x="12" y="17.3" width="2" height="2.7" fill="#1f6d9a"/></svg>
<svg style="left:953px;top:366px" width="10" height="6" viewBox="0 0 10 6"><path d="M0 0 H9.5 L4.75 6 Z" fill="#1f6d9a"/></svg>
<div class="t" style="left:376px;top:395px;font-family:'Liberation Mono';font-size:12.5px;color:#707070">[HEX]</div>
<div class="t" style="left:446px;top:395px;font-size:11px;letter-spacing:1.9px;color:#2a4c9c">00</div>
<div class="t" style="left:470px;top:395px;font-size:11px;letter-spacing:1.9px;color:#2a4c9c">01</div>
<div class="t" style="left:494px;top:395px;font-size:11px;letter-spacing:1.9px;color:#2a4c9c">02</div>
<div class="t" style="left:518px;top:395px;font-size:11px;letter-spacing:1.9px;color:#2a4c9c">03</div>
<div class="t" style="left:542px;top:395px;font-size:11px;letter-spacing:1.9px;color:#2a4c9c">04</div>
<div class="t" style="left:566px;top:395px;font-size:11px;letter-spacing:1.9px;color:#2a4c9c">05</div>
<div class="t" style="left:590px;top:395px;font-size:11px;letter-spacing:1.9px;color:#2a4c9c">06</div>
<div class="t" style="left:614px;top:395px;font-size:11px;letter-spacing:1.9px;color:#2a4c9c">07</div>
<div class="t" style="left:638px;top:395px;font-size:11px;letter-spacing:1.9px;color:#2a4c9c">08</div>
<div class="t" style="left:662px;top:395px;font-size:11px;letter-spacing:1.9px;color:#2a4c9c">09</div>
<div class="t" style="left:686px;top:395px;font-size:11px;letter-spacing:1.9px;color:#2a4c9c">0A</div>
<div class="t" style="left:710px;top:395px;font-size:11px;letter-spacing:1.9px;color:#2a4c9c">0B</div>
<div class="t" style="left:734px;top:395px;font-size:11px;letter-spacing:1.9px;color:#2a4c9c">0C</div>
<div class="t" style="left:758px;top:395px;font-size:11px;letter-spacing:1.9px;color:#2a4c9c">0D</div>
<div class="t" style="left:782px;top:395px;font-size:11px;letter-spacing:1.9px;color:#2a4c9c">0E</div>
<div class="t" style="left:806px;top:395px;font-size:11px;letter-spacing:1.9px;color:#2a4c9c">0F</div>
<svg style="left:845px;top:396px" width="7" height="8" viewBox="0 0 7 8"><path d="M6 0 V7.5 L0.5 3.75 Z" fill="#444"/></svg>
<div class="t" style="left:862px;top:395px;font-family:'Liberation Mono';font-size:12.5px;color:#888">16</div>
<svg style="left:888px;top:396px" width="7" height="8" viewBox="0 0 7 8"><path d="M0 0 V7.5 L5.5 3.75 Z" fill="#444"/></svg>
<div class="a" style="left:346px;top:408px;width:669px;height:1px;background:#c4c4c4"></div>
<div class="a" style="left:1014px;top:390px;width:1px;height:207px;background:#c4c4c4"></div>
<div class="a" style="left:436px;top:409px;width:1px;height:186px;background:#b4b4b4"></div>
<div class="a" style="left:835px;top:409px;width:1px;height:186px;background:#b4b4b4"></div>
<div class="a" style="left:441px;top:413px;width:24px;height:17px;background:#2a78ae"></div>
<div class="a" style="left:845px;top:413px;width:8px;height:17px;background:#b6d3ea"></div>
<div class="t" style="left:368px;top:418px;font-size:11px;letter-spacing:1.88px;color:#2e55a0">00000000</div>
<div class="t" style="left:368px;top:435px;font-size:11px;letter-spacing:1.88px;color:#2e55a0">00000010</div>
<div class="t" style="left:368px;top:452px;font-size:11px;letter-spacing:1.88px;color:#2e55a0">00000020</div>
<div class="t" style="left:368px;top:469px;font-size:11px;letter-spacing:1.88px;color:#2e55a0">00000030</div>
<div class="t" style="left:368px;top:486px;font-size:11px;letter-spacing:1.88px;color:#2e55a0">00000040</div>
<div class="t" style="left:368px;top:503px;font-size:11px;letter-spacing:1.88px;color:#2e55a0">00000050</div>
<div class="t" style="left:368px;top:520px;font-size:11px;letter-spacing:1.88px;color:#2e55a0">00000060</div>
<div class="t" style="left:368px;top:537px;font-size:11px;letter-spacing:1.88px;color:#2e55a0">00000070</div>
<div class="t" style="left:368px;top:554px;font-size:11px;letter-spacing:1.88px;color:#2e55a0">00000080</div>
<div class="t" style="left:368px;top:571px;font-size:11px;letter-spacing:1.88px;color:#2e55a0">00000090</div>
<svg style="left:445px;top:413px" width="400" height="180" viewBox="0 0 400 180"><defs><ellipse id="z" cx="2.9" cy="7.9" rx="2.4" ry="3.5" fill="none" stroke="#111" stroke-width="1.2"/></defs><use href="#z" x="24" y="0"/><use href="#z" x="32" y="0"/><use href="#z" x="48" y="0"/><use href="#z" x="56" y="0"/><use href="#z" x="72" y="0"/><use href="#z" x="80" y="0"/><use href="#z" x="96" y="0"/><use href="#z" x="104" y="0"/><use href="#z" x="120" y="0"/><use href="#z" x="128" y="0"/><use href="#z" x="144" y="0"/><use href="#z" x="152" y="0"/><use href="#z" x="168" y="0"/><use href="#z" x="176" y="0"/><use href="#z" x="192" y="0"/><use href="#z" x="200" y="0"/><use href="#z" x="216" y="0"/><use href="#z" x="224" y="0"/><use href="#z" x="240" y="0"/><use href="#z" x="248" y="0"/><use href="#z" x="264" y="0"/><use href="#z" x="272" y="0"/><use href="#z" x="288" y="0"/><use href="#z" x="296" y="0"/><use href="#z" x="312" y="0"/><use href="#z" x="320" y="0"/><use href="#z" x="336" y="0"/><use href="#z" x="344" y="0"/><use href="#z" x="360" y="0"/><use href="#z" x="368" y="0"/><use href="#z" x="0" y="17"/><use href="#z" x="8" y="17"/><use href="#z" x="24" y="17"/><use href="#z" x="32" y="17"/><use href="#z" x="48" y="17"/><use href="#z" x="56" y="17"/><use href="#z" x="72" y="17"/><use href="#z" x="80" y="17"/><use href="#z" x="96" y="17"/><use href="#z" x="104" y="17"/><use href="#z" x="120" y="17"/><use href="#z" x="128" y="17"/><use href="#z" x="144" y="17"/><use href="#z" x="152" y="17"/><use href="#z" x="168" y="17"/><use href="#z" x="176" y="17"/><use href="#z" x="192" y="17"/><use href="#z" x="200" y="17"/><use href="#z" x="216" y="17"/><use href="#z" x="224" y="17"/><use href="#z" x="240" y="17"/><use href="#z" x="248" y="17"/><use href="#z" x="264" y="17"/><use href="#z" x="272" y="17"/><use href="#z" x="288" y="17"/><use href="#z" x="296" y="17"/><use href="#z" x="312" y="17"/><use href="#z" x="320" y="17"/><use href="#z" x="336" y="17"/><use href="#z" x="344" y="17"/><use href="#z" x="360" y="17"/><use href="#z" x="368" y="17"/><use href="#z" x="0" y="34"/><use href="#z" x="8" y="34"/><use href="#z" x="24" y="34"/><use href="#z" x="32" y="34"/><use href="#z" x="48" y="34"/><use href="#z" x="56" y="34"/><use href="#z" x="72" y="34"/><use href="#z" x="80" y="34"/><use href="#z" x="96" y="34"/><use href="#z" x="104" y="34"/><use href="#z" x="120" y="34"/><use href="#z" x="128" y="34"/><use href="#z" x="144" y="34"/><use href="#z" x="152" y="34"/><use href="#z" x="168" y="34"/><use href="#z" x="176" y="34"/><use href="#z" x="192" y="34"/><use href="#z" x="200" y="34"/><use href="#z" x="216" y="34"/><use href="#z" x="224" y="34"/><use href="#z" x="240" y="34"/><use href="#z" x="248" y="34"/><use href="#z" x="264" y="34"/><use href="#z" x="272" y="34"/><use href="#z" x="288" y="34"/><use href="#z" x="296" y="34"/><use href="#z" x="312" y="34"/><use href="#z" x="320" y="34"/><use href="#z" x="336" y="34"/><use href="#z" x="344" y="34"/><use href="#z" x="360" y="34"/><use href="#z" x="368" y="34"/><use href="#z" x="0" y="51"/><use href="#z" x="8" y="51"/><use href="#z" x="24" y="51"/><use href="#z" x="32" y="51"/><use href="#z" x="48" y="51"/><use href="#z" x="56" y="51"/><use href="#z" x="72" y="51"/><use href="#z" x="80" y="51"/><use href="#z" x="96" y="51"/><use href="#z" x="104" y="51"/><use href="#z" x="120" y="51"/><use href="#z" x="128" y="51"/><use href="#z" x="144" y="51"/><use href="#z" x="152" y="51"/><use href="#z" x="168" y="51"/><use href="#z" x="176" y="51"/><use href="#z" x="192" y="51"/><use href="#z" x="200" y="51"/><use href="#z" x="216" y="51"/><use href="#z" x="224" y="51"/><use href="#z" x="240" y="51"/><use href="#z" x="248" y="51"/><use href="#z" x="264" y="51"/><use href="#z" x="272" y="51"/><use href="#z" x="288" y="51"/><use href="#z" x="296" y="51"/><use href="#z" x="312" y="51"/><use href="#z" x="320" y="51"/><use href="#z" x="336" y="51"/><use href="#z" x="344" y="51"/><use href="#z" x="360" y="51"/><use href="#z" x="368" y="51"/><use href="#z" x="0" y="68"/><use href="#z" x="8" y="68"/><use href="#z" x="24" y="68"/><use href="#z" x="32" y="68"/><use href="#z" x="48" y="68"/><use href="#z" x="56" y="68"/><use href="#z" x="72" y="68"/><use href="#z" x="80" y="68"/><use href="#z" x="96" y="68"/><use href="#z" x="104" y="68"/><use href="#z" x="120" y="68"/><use href="#z" x="128" y="68"/><use href="#z" x="144" y="68"/><use href="#z" x="152" y="68"/><use href="#z" x="168" y="68"/><use href="#z" x="176" y="68"/><use href="#z" x="192" y="68"/><use href="#z" x="200" y="68"/><use href="#z" x="216" y="68"/><use href="#z" x="224" y="68"/><use href="#z" x="240" y="68"/><use href="#z" x="248" y="68"/><use href="#z" x="264" y="68"/><use href="#z" x="272" y="68"/><use href="#z" x="288" y="68"/><use href="#z" x="296" y="68"/><use href="#z" x="312" y="68"/><use href="#z" x="320" y="68"/><use href="#z" x="336" y="68"/><use href="#z" x="344" y="68"/><use href="#z" x="360" y="68"/><use href="#z" x="368" y="68"/><use href="#z" x="0" y="85"/><use href="#z" x="8" y="85"/><use href="#z" x="24" y="85"/><use href="#z" x="32" y="85"/><use href="#z" x="48" y="85"/><use href="#z" x="56" y="85"/><use href="#z" x="72" y="85"/><use href="#z" x="80" y="85"/><use href="#z" x="96" y="85"/><use href="#z" x="104" y="85"/><use href="#z" x="120" y="85"/><use href="#z" x="128" y="85"/><use href="#z" x="144" y="85"/><use href="#z" x="152" y="85"/><use href="#z" x="168" y="85"/><use href="#z" x="176" y="85"/><use href="#z" x="192" y="85"/><use href="#z" x="200" y="85"/><use href="#z" x="216" y="85"/><use href="#z" x="224" y="85"/><use href="#z" x="240" y="85"/><use href="#z" x="248" y="85"/><use href="#z" x="264" y="85"/><use href="#z" x="272" y="85"/><use href="#z" x="288" y="85"/><use href="#z" x="296" y="85"/><use href="#z" x="312" y="85"/><use href="#z" x="320" y="85"/><use href="#z" x="336" y="85"/><use href="#z" x="344" y="85"/><use href="#z" x="360" y="85"/><use href="#z" x="368" y="85"/><use href="#z" x="0" y="102"/><use href="#z" x="8" y="102"/><use href="#z" x="24" y="102"/><use href="#z" x="32" y="102"/><use href="#z" x="48" y="102"/><use href="#z" x="56" y="102"/><use href="#z" x="72" y="102"/><use href="#z" x="80" y="102"/><use href="#z" x="96" y="102"/><use href="#z" x="104" y="102"/><use href="#z" x="120" y="102"/><use href="#z" x="128" y="102"/><use href="#z" x="144" y="102"/><use href="#z" x="152" y="102"/><use href="#z" x="168" y="102"/><use href="#z" x="176" y="102"/><use href="#z" x="192" y="102"/><use href="#z" x="200" y="102"/><use href="#z" x="216" y="102"/><use href="#z" x="224" y="102"/><use href="#z" x="240" y="102"/><use href="#z" x="248" y="102"/><use href="#z" x="264" y="102"/><use href="#z" x="272" y="102"/><use href="#z" x="288" y="102"/><use href="#z" x="296" y="102"/><use href="#z" x="312" y="102"/><use href="#z" x="320" y="102"/><use href="#z" x="336" y="102"/><use href="#z" x="344" y="102"/><use href="#z" x="360" y="102"/><use href="#z" x="368" y="102"/><use href="#z" x="0" y="119"/><use href="#z" x="8" y="119"/><use href="#z" x="24" y="119"/><use href="#z" x="32" y="119"/><use href="#z" x="48" y="119"/><use href="#z" x="56" y="119"/><use href="#z" x="72" y="119"/><use href="#z" x="80" y="119"/><use href="#z" x="96" y="119"/><use href="#z" x="104" y="119"/><use href="#z" x="120" y="119"/><use href="#z" x="128" y="119"/><use href="#z" x="144" y="119"/><use href="#z" x="152" y="119"/><use href="#z" x="168" y="119"/><use href="#z" x="176" y="119"/><use href="#z" x="192" y="119"/><use href="#z" x="200" y="119"/><use href="#z" x="216" y="119"/><use href="#z" x="224" y="119"/><use href="#z" x="240" y="119"/><use href="#z" x="248" y="119"/><use href="#z" x="264" y="119"/><use href="#z" x="272" y="119"/><use href="#z" x="288" y="119"/><use href="#z" x="296" y="119"/><use href="#z" x="312" y="119"/><use href="#z" x="320" y="119"/><use href="#z" x="336" y="119"/><use href="#z" x="344" y="119"/><use href="#z" x="360" y="119"/><use href="#z" x="368" y="119"/><use href="#z" x="0" y="136"/><use href="#z" x="8" y="136"/><use href="#z" x="24" y="136"/><use href="#z" x="32" y="136"/><use href="#z" x="48" y="136"/><use href="#z" x="56" y="136"/><use href="#z" x="72" y="136"/><use href="#z" x="80" y="136"/><use href="#z" x="96" y="136"/><use href="#z" x="104" y="136"/><use href="#z" x="120" y="136"/><use href="#z" x="128" y="136"/><use href="#z" x="144" y="136"/><use href="#z" x="152" y="136"/><use href="#z" x="168" y="136"/><use href="#z" x="176" y="136"/><use href="#z" x="192" y="136"/><use href="#z" x="200" y="136"/><use href="#z" x="216" y="136"/><use href="#z" x="224" y="136"/><use href="#z" x="240" y="136"/><use href="#z" x="248" y="136"/><use href="#z" x="264" y="136"/><use href="#z" x="272" y="136"/><use href="#z" x="288" y="136"/><use href="#z" x="296" y="136"/><use href="#z" x="312" y="136"/><use href="#z" x="320" y="136"/><use href="#z" x="336" y="136"/><use href="#z" x="344" y="136"/><use href="#z" x="360" y="136"/><use href="#z" x="368" y="136"/><use href="#z" x="0" y="153"/><use href="#z" x="8" y="153"/><use href="#z" x="24" y="153"/><use href="#z" x="32" y="153"/><use href="#z" x="48" y="153"/><use href="#z" x="56" y="153"/><use href="#z" x="72" y="153"/><use href="#z" x="80" y="153"/><use href="#z" x="96" y="153"/><use href="#z" x="104" y="153"/><use href="#z" x="120" y="153"/><use href="#z" x="128" y="153"/><use href="#z" x="144" y="153"/><use href="#z" x="152" y="153"/><use href="#z" x="168" y="153"/><use href="#z" x="176" y="153"/><use href="#z" x="192" y="153"/><use href="#z" x="200" y="153"/><use href="#z" x="216" y="153"/><use href="#z" x="224" y="153"/><use href="#z" x="240" y="153"/><use href="#z" x="248" y="153"/><use href="#z" x="264" y="153"/><use href="#z" x="272" y="153"/><use href="#z" x="288" y="153"/><use href="#z" x="296" y="153"/><use href="#z" x="312" y="153"/><use href="#z" x="320" y="153"/><use href="#z" x="336" y="153"/><use href="#z" x="344" y="153"/><use href="#z" x="360" y="153"/><use href="#z" x="368" y="153"/><ellipse cx="2.9" cy="7.9" rx="2.35" ry="3.45" fill="none" stroke="#fff" stroke-width="1.1"/><ellipse cx="10.9" cy="7.9" rx="2.35" ry="3.45" fill="none" stroke="#fff" stroke-width="1.1"/></svg>
<svg style="left:845px;top:413px" width="150" height="170" viewBox="0 0 150 170"><rect x="3" y="10" width="2" height="2" fill="#2a78ae"/><rect x="12" y="10" width="2" height="2" fill="#000"/><rect x="21" y="10" width="2" height="2" fill="#000"/><rect x="30" y="10" width="2" height="2" fill="#000"/><rect x="39" y="10" width="2" height="2" fill="#000"/><rect x="48" y="10" width="2" height="2" fill="#000"/><rect x="57" y="10" width="2" height="2" fill="#000"/><rect x="66" y="10" width="2" height="2" fill="#000"/><rect x="75" y="10" width="2" height="2" fill="#000"/><rect x="84" y="10" width="2" height="2" fill="#000"/><rect x="93" y="10" width="2" height="2" fill="#000"/><rect x="102" y="10" width="2" height="2" fill="#000"/><rect x="111" y="10" width="2" height="2" fill="#000"/><rect x="120" y="10" width="2" height="2" fill="#000"/><rect x="129" y="10" width="2" height="2" fill="#000"/><rect x="138" y="10" width="2" height="2" fill="#000"/><rect x="3" y="27" width="2" height="2" fill="#000"/><rect x="12" y="27" width="2" height="2" fill="#000"/><rect x="21" y="27" width="2" height="2" fill="#000"/><rect x="30" y="27" width="2" height="2" fill="#000"/><rect x="39" y="27" width="2" height="2" fill="#000"/><rect x="48" y="27" width="2" height="2" fill="#000"/><rect x="57" y="27" width="2" height="2" fill="#000"/><rect x="66" y="27" width="2" height="2" fill="#000"/><rect x="75" y="27" width="2" height="2" fill="#000"/><rect x="84" y="27" width="2" height="2" fill="#000"/><rect x="93" y="27" width="2" height="2" fill="#000"/><rect x="102" y="27" width="2" height="2" fill="#000"/><rect x="111" y="27" width="2" height="2" fill="#000"/><rect x="120" y="27" width="2" height="2" fill="#000"/><rect x="129" y="27" width="2" height="2" fill="#000"/><rect x="138" y="27" width="2" height="2" fill="#000"/><rect x="3" y="44" width="2" height="2" fill="#000"/><rect x="12" y="44" width="2" height="2" fill="#000"/><rect x="21" y="44" width="2" height="2" fill="#000"/><rect x="30" y="44" width="2" height="2" fill="#000"/><rect x="39" y="44" width="2" height="2" fill="#000"/><rect x="48" y="44" width="2" height="2" fill="#000"/><rect x="57" y="44" width="2" height="2" fill="#000"/><rect x="66" y="44" width="2" height="2" fill="#000"/><rect x="75" y="44" width="2" height="2" fill="#000"/><rect x="84" y="44" width="2" height="2" fill="#000"/><rect x="93" y="44" width="2" height="2" fill="#000"/><rect x="102" y="44" width="2" height="2" fill="#000"/><rect x="111" y="44" width="2" height="2" fill="#000"/><rect x="120" y="44" width="2" height="2" fill="#000"/><rect x="129" y="44" width="2" height="2" fill="#000"/><rect x="138" y="44" width="2" height="2" fill="#000"/><rect x="3" y="61" width="2" height="2" fill="#000"/><rect x="12" y="61" width="2" height="2" fill="#000"/><rect x="21" y="61" width="2" height="2" fill="#000"/><rect x="30" y="61" width="2" height="2" fill="#000"/><rect x="39" y="61" width="2" height="2" fill="#000"/><rect x="48" y="61" width="2" height="2" fill="#000"/><rect x="57" y="61" width="2" height="2" fill="#000"/><rect x="66" y="61" width="2" height="2" fill="#000"/><rect x="75" y="61" width="2" height="2" fill="#000"/><rect x="84" y="61" width="2" height="2" fill="#000"/><rect x="93" y="61" width="2" height="2" fill="#000"/><rect x="102" y="61" width="2" height="2" fill="#000"/><rect x="111" y="61" width="2" height="2" fill="#000"/><rect x="120" y="61" width="2" height="2" fill="#000"/><rect x="129" y="61" width="2" height="2" fill="#000"/><rect x="138" y="61" width="2" height="2" fill="#000"/><rect x="3" y="78" width="2" height="2" fill="#000"/><rect x="12" y="78" width="2" height="2" fill="#000"/><rect x="21" y="78" width="2" height="2" fill="#000"/><rect x="30" y="78" width="2" height="2" fill="#000"/><rect x="39" y="78" width="2" height="2" fill="#000"/><rect x="48" y="78" width="2" height="2" fill="#000"/><rect x="57" y="78" width="2" height="2" fill="#000"/><rect x="66" y="78" width="2" height="2" fill="#000"/><rect x="75" y="78" width="2" height="2" fill="#000"/><rect x="84" y="78" width="2" height="2" fill="#000"/><rect x="93" y="78" width="2" height="2" fill="#000"/><rect x="102" y="78" width="2" height="2" fill="#000"/><rect x="111" y="78" width="2" height="2" fill="#000"/><rect x="120" y="78" width="2" height="2" fill="#000"/><rect x="129" y="78" width="2" height="2" fill="#000"/><rect x="138" y="78" width="2" height="2" fill="#000"/><rect x="3" y="95" width="2" height="2" fill="#000"/><rect x="12" y="95" width="2" height="2" fill="#000"/><rect x="21" y="95" width="2" height="2" fill="#000"/><rect x="30" y="95" width="2" height="2" fill="#000"/><rect x="39" y="95" width="2" height="2" fill="#000"/><rect x="48" y="95" width="2" height="2" fill="#000"/><rect x="57" y="95" width="2" height="2" fill="#000"/><rect x="66" y="95" width="2" height="2" fill="#000"/><rect x="75" y="95" width="2" height="2" fill="#000"/><rect x="84" y="95" width="2" height="2" fill="#000"/><rect x="93" y="95" width="2" height="2" fill="#000"/><rect x="102" y="95" width="2" height="2" fill="#000"/><rect x="111" y="95" width="2" height="2" fill="#000"/><rect x="120" y="95" width="2" height="2" fill="#000"/><rect x="129" y="95" width="2" height="2" fill="#000"/><rect x="138" y="95" width="2" height="2" fill="#000"/><rect x="3" y="112" width="2" height="2" fill="#000"/><rect x="12" y="112" width="2" height="2" fill="#000"/><rect x="21" y="112" width="2" height="2" fill="#000"/><rect x="30" y="112" width="2" height="2" fill="#000"/><rect x="39" y="112" width="2" height="2" fill="#000"/><rect x="48" y="112" width="2" height="2" fill="#000"/><rect x="57" y="112" width="2" height="2" fill="#000"/><rect x="66" y="112" width="2" height="2" fill="#000"/><rect x="75" y="112" width="2" height="2" fill="#000"/><rect x="84" y="112" width="2" height="2" fill="#000"/><rect x="93" y="112" width="2" height="2" fill="#000"/><rect x="102" y="112" width="2" height="2" fill="#000"/><rect x="111" y="112" width="2" height="2" fill="#000"/><rect x="120" y="112" width="2" height="2" fill="#000"/><rect x="129" y="112" width="2" height="2" fill="#000"/><rect x="138" y="112" width="2" height="2" fill="#000"/><rect x="3" y="129" width="2" height="2" fill="#000"/><rect x="12" y="129" width="2" height="2" fill="#000"/><rect x="21" y="129" width="2" height="2" fill="#000"/><rect x="30" y="129" width="2" height="2" fill="#000"/><rect x="39" y="129" width="2" height="2" fill="#000"/><rect x="48" y="129" width="2" height="2" fill="#000"/><rect x="57" y="129" width="2" height="2" fill="#000"/><rect x="66" y="129" width="2" height="2" fill="#000"/><rect x="75" y="129" width="2" height="2" fill="#000"/><rect x="84" y="129" width="2" height="2" fill="#000"/><rect x="93" y="129" width="2" height="2" fill="#000"/><rect x="102" y="129" width="2" height="2" fill="#000"/><rect x="111" y="129" width="2" height="2" fill="#000"/><rect x="120" y="129" width="2" height="2" fill="#000"/><rect x="129" y="129" width="2" height="2" fill="#000"/><rect x="138" y="129" width="2" height="2" fill="#000"/><rect x="3" y="146" width="2" height="2" fill="#000"/><rect x="12" y="146" width="2" height="2" fill="#000"/><rect x="21" y="146" width="2" height="2" fill="#000"/><rect x="30" y="146" width="2" height="2" fill="#000"/><rect x="39" y="146" width="2" height="2" fill="#000"/><rect x="48" y="146" width="2" height="2" fill="#000"/><rect x="57" y="146" width="2" height="2" fill="#000"/><rect x="66" y="146" width="2" height="2" fill="#000"/><rect x="75" y="146" width="2" height="2" fill="#000"/><rect x="84" y="146" width="2" height="2" fill="#000"/><rect x="93" y="146" width="2" height="2" fill="#000"/><rect x="102" y="146" width="2" height="2" fill="#000"/><rect x="111" y="146" width="2" height="2" fill="#000"/><rect x="120" y="146" width="2" height="2" fill="#000"/><rect x="129" y="146" width="2" height="2" fill="#000"/><rect x="138" y="146" width="2" height="2" fill="#000"/><rect x="3" y="163" width="2" height="2" fill="#000"/><rect x="12" y="163" width="2" height="2" fill="#000"/><rect x="21" y="163" width="2" height="2" fill="#000"/><rect x="30" y="163" width="2" height="2" fill="#000"/><rect x="39" y="163" width="2" height="2" fill="#000"/><rect x="48" y="163" width="2" height="2" fill="#000"/><rect x="57" y="163" width="2" height="2" fill="#000"/><rect x="66" y="163" width="2" height="2" fill="#000"/><rect x="75" y="163" width="2" height="2" fill="#000"/><rect x="84" y="163" width="2" height="2" fill="#000"/><rect x="93" y="163" width="2" height="2" fill="#000"/><rect x="102" y="163" width="2" height="2" fill="#000"/><rect x="111" y="163" width="2" height="2" fill="#000"/><rect x="120" y="163" width="2" height="2" fill="#000"/><rect x="129" y="163" width="2" height="2" fill="#000"/><rect x="138" y="163" width="2" height="2" fill="#000"/></svg>
<div class="a" style="left:999px;top:410px;width:15px;height:184px;background:#eceeee"></div>
<div class="a" style="left:999px;top:410px;width:15px;height:12px;background:#cdcdcd"></div>
<svg style="left:1002px;top:557px" width="9" height="6" viewBox="0 0 9 6"><path d="M1 5 L4.5 1.5 L8 5" fill="none" stroke="#505050" stroke-width="1.8"/></svg>
<svg style="left:1002px;top:585px" width="9" height="6" viewBox="0 0 9 6"><path d="M1 1 L4.5 4.5 L8 1" fill="none" stroke="#505050" stroke-width="1.8"/></svg>
<div class="a" style="left:346px;top:596px;width:669px;height:1px;background:#bcbcbc"></div>
<div style="position:absolute;top:601px;height:19px;border:1px solid #c9d5e2;background:#fff;left:350px;width:110px"></div>
<div class="t" style="left:350px;width:110px;text-align:center;top:606px;font-size:10.7px;color:#62739a">0x00000000</div>
<div style="position:absolute;top:601px;height:19px;border:1px solid #c9d5e2;background:#fff;left:465px;width:200px"></div>
<div class="t" style="left:465px;width:200px;text-align:center;top:606px;font-size:10.7px;color:#62739a">[n/a]</div>
<div style="position:absolute;top:601px;height:19px;border:1px solid #c9d5e2;background:#fff;left:668px;width:110px"></div>
<div class="t" style="left:668px;width:110px;text-align:center;top:606px;font-size:10.7px;color:#62739a">0x00000000</div>
<div style="position:absolute;top:601px;height:19px;border:1px solid #c9d5e2;background:#fff;left:783px;width:208px"></div>
<div class="a" style="left:971px;top:602px;width:1px;height:17px;background:#c9d5e2"></div>
<div class="t" style="left:785px;top:606px;font-size:10.6px;color:#62739a">ANSI - Central European / CP-1250</div>
<svg style="left:978px;top:608px" width="7" height="5" viewBox="0 0 7 5"><path d="M0 0 H7 L3.5 5 Z" fill="#333"/></svg>
<div style="position:absolute;top:601px;height:19px;border:1px solid #c9d5e2;background:#fff;left:996px;width:15px"></div>
<div class="a" style="left:346px;top:624px;width:669px;height:1px;background:#f2f2f2"></div>
<!-- bottom band -->
<div class="a" style="left:8px;top:632px;width:1024px;height:80px;background:#31608a"></div>
<div class="a" style="left:783px;top:649px;width:113px;height:43px;border:2px solid #fff;border-radius:2px"></div>
<div class="t" style="left:783px;top:663px;width:113px;text-align:center;font-size:15.5px;font-weight:bold;color:#fff">Start scan</div>
<div class="a" style="left:917px;top:649px;width:95px;height:43px;border:2px solid #fff;border-radius:2px"></div>
<div class="t" style="left:917px;top:663px;width:95px;text-align:center;font-size:15.5px;font-weight:bold;color:#fff">Explore</div>

</body></html>
